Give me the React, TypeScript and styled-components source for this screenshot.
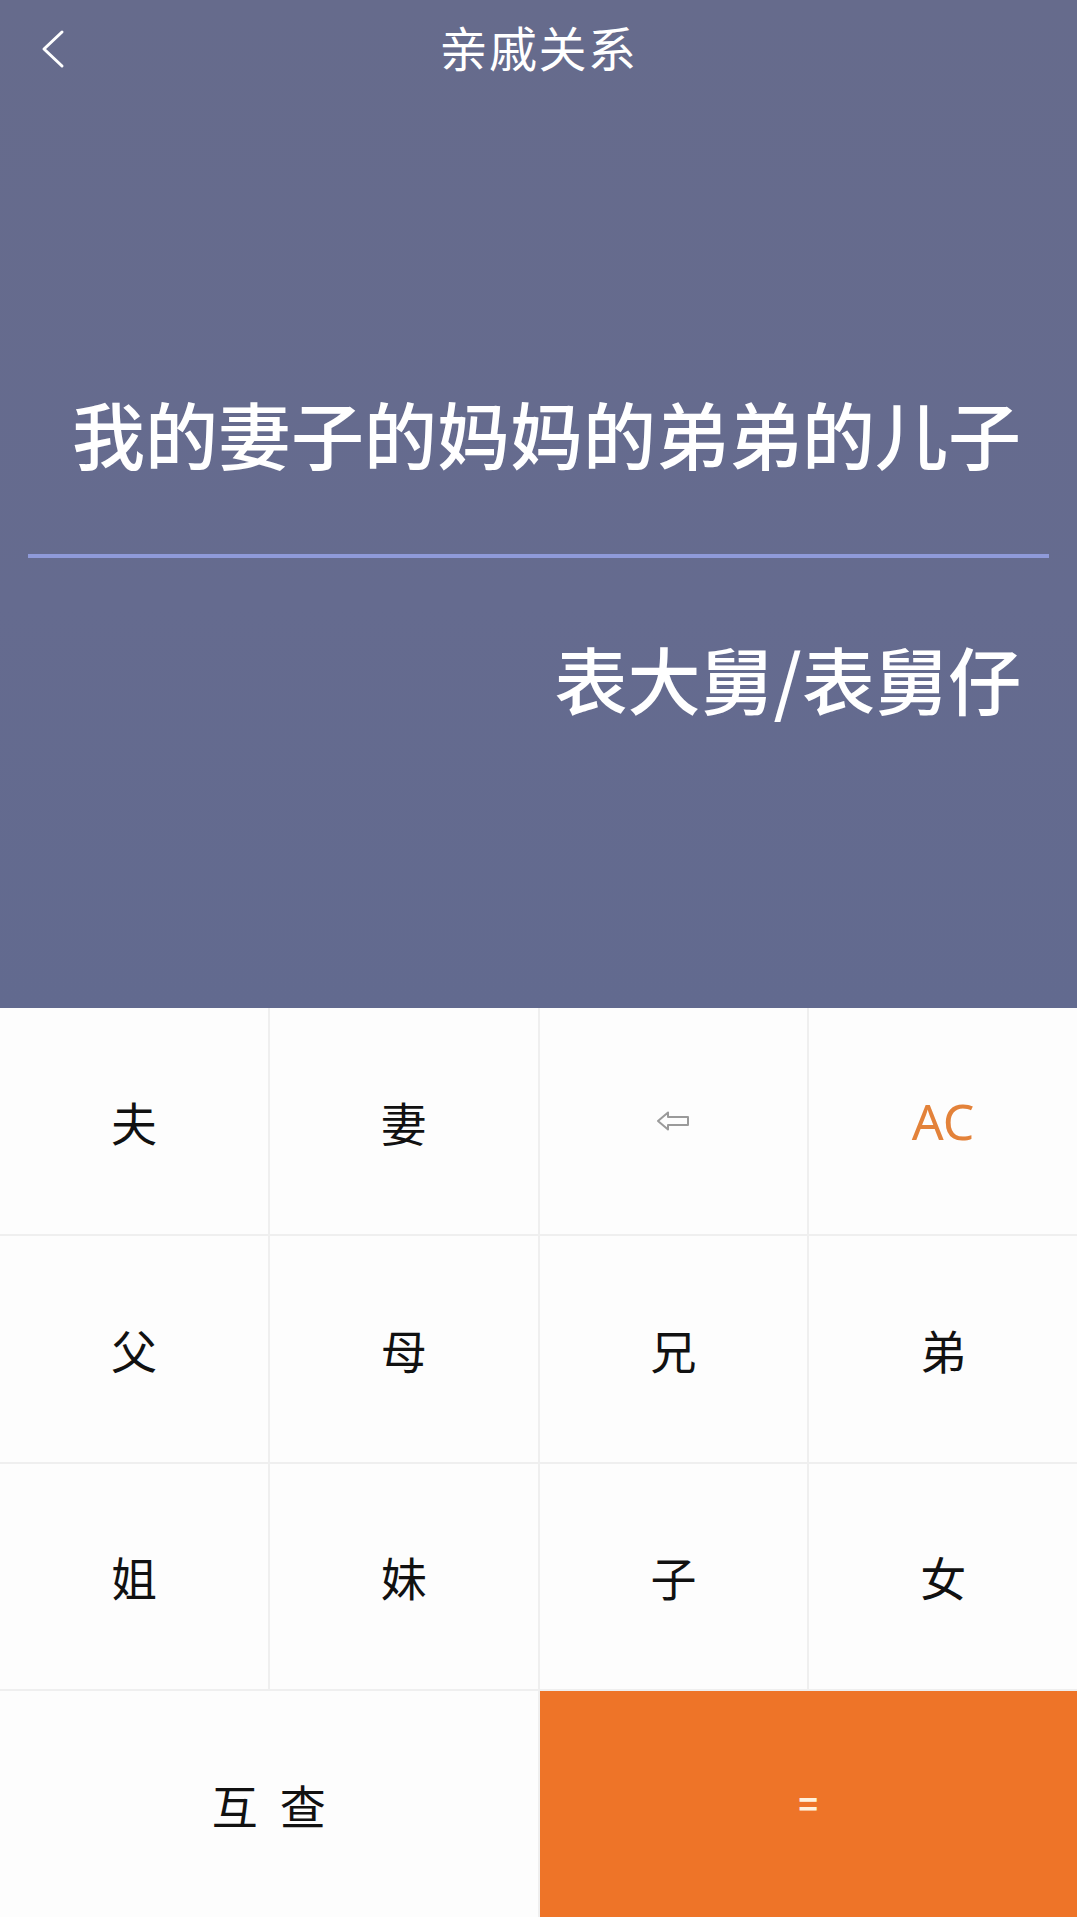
import React from "react";
import styled, { createGlobalStyle } from "styled-components";

const Global = createGlobalStyle`
  html, body { margin: 0; padding: 0; background: #ffffff; }
  * { box-sizing: border-box; }
  body { font-family: "Noto Sans CJK SC", "Noto Sans", sans-serif; }
`;

const Screen = styled.div`
  width: 1077px;
  height: 1917px;
  display: flex;
  flex-direction: column;
  overflow: hidden;
`;

const Display = styled.section`
  height: 1008px;
  flex: none;
  display: flex;
  flex-direction: column;
  background: linear-gradient(180deg, #666b8c 0%, #656b8f 60%, #626a8f 100%);
  color: #ffffff;
`;

const Header = styled.header`
  height: 98px;
  display: grid;
  grid-template-columns: 1fr auto 1fr;
  align-items: center;
`;

const BackButton = styled.button`
  justify-self: start;
  width: 80px;
  height: 80px;
  margin-left: 40px;
  padding: 0;
  border: 0;
  background: transparent;
  display: flex;
  align-items: center;
  justify-content: flex-start;
  color: #ffffff;
`;

const Title = styled.h1`
  margin: 0 0 6px;
  font-size: 48px;
  font-weight: 400;
  letter-spacing: 1.5px;
  line-height: 1;
`;

const Expression = styled.div`
  margin-top: 291px;
  padding: 0 56px;
  text-align: right;
  font-size: 73px;
  font-weight: 500;
  line-height: 86px;
  white-space: nowrap;
`;

const Divider = styled.hr`
  margin: 79px 28px 0;
  height: 4px;
  border: 0;
  background: #8f9ad9;
`;

const Result = styled.div`
  margin-top: 76px;
  padding: 0 56px;
  text-align: right;
  font-size: 73px;
  font-weight: 500;
  line-height: 86px;
  white-space: nowrap;
`;

const Keypad = styled.section`
  flex: 1;
  display: grid;
  grid-template-columns: repeat(4, 1fr);
  grid-template-rows: repeat(4, 1fr);
  gap: 2px;
  background: #efefef;
`;

const Key = styled.button<{ $tone?: "text" | "muted" | "accent" | "primary"; $span?: number }>`
  grid-column: span ${(p) => p.$span ?? 1};
  border: 0;
  margin: 0;
  padding: 0;
  display: flex;
  align-items: center;
  justify-content: center;
  gap: 22px;
  font-family: "Noto Sans CJK SC", "Noto Sans", sans-serif;
  font-size: 46px;
  font-weight: 400;
  background: ${(p) => (p.$tone === "primary" ? "#ee7428" : "#fdfdfd")};
  color: ${(p) =>
    p.$tone === "accent"
      ? "#e3823a"
      : p.$tone === "muted"
      ? "#9a9a9a"
      : p.$tone === "primary"
      ? "#fff1dc"
      : "#111111"};
`;

const AcLabel = styled.span`
  font-family: "Noto Sans", "Open Sans", sans-serif;
  font-size: 50px;
`;

const EqLabel = styled.span`
  font-family: "Liberation Sans", sans-serif;
  font-weight: 700;
  font-size: 34px;
`;

const Chevron = () => (
  <svg width="26" height="40" viewBox="0 0 26 40" fill="none">
    <path d="M22 3 L4 20 L22 37" stroke="#ffffff" strokeWidth="3" strokeLinecap="round" strokeLinejoin="round" />
  </svg>
);

const BackspaceArrow = () => (
  <svg width="34" height="22" viewBox="0 0 34 22" fill="none">
    <path
      d="M2 11 L12 2.5 L12 7 L32 7 L32 15 L12 15 L12 19.5 Z"
      stroke="#9a9a9a"
      strokeWidth="2"
      strokeLinejoin="round"
    />
  </svg>
);

const keys: string[] = ["父", "母", "兄", "弟", "姐", "妹", "子", "女"];

export default function App() {
  return (
    <>
      <Global />
      <Screen>
        <Display>
          <Header>
            <BackButton aria-label="返回">
              <Chevron />
            </BackButton>
            <Title>亲戚关系</Title>
            <span />
          </Header>
          <Expression>我的妻子的妈妈的弟弟的儿子</Expression>
          <Divider />
          <Result>表大舅/表舅仔</Result>
        </Display>
        <Keypad>
          <Key>夫</Key>
          <Key>妻</Key>
          <Key $tone="muted" aria-label="删除">
            <BackspaceArrow />
          </Key>
          <Key $tone="accent">
            <AcLabel>AC</AcLabel>
          </Key>
          {keys.map((k) => (
            <Key key={k}>{k}</Key>
          ))}
          <Key $span={2}>
            <span>互</span>
            <span>查</span>
          </Key>
          <Key $span={2} $tone="primary">
            <EqLabel>=</EqLabel>
          </Key>
        </Keypad>
      </Screen>
    </>
  );
}
